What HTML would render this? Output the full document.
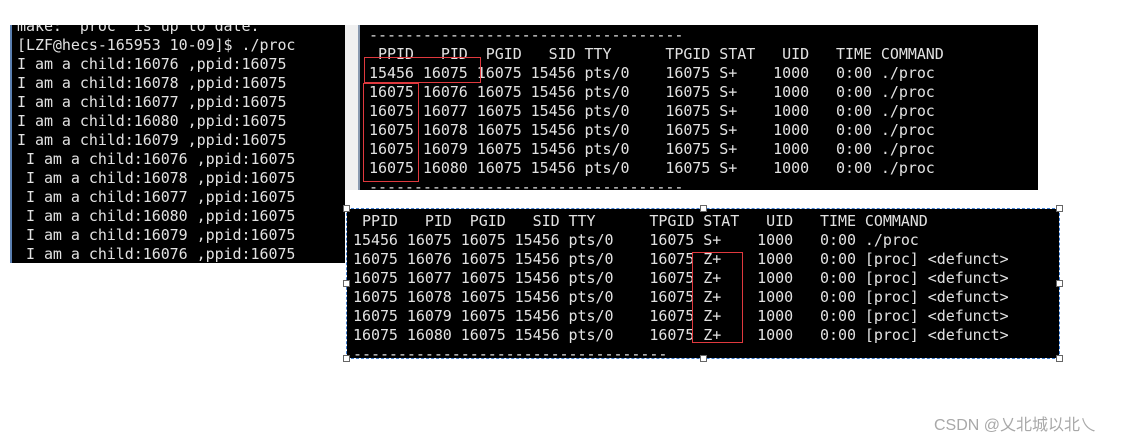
<!DOCTYPE html>
<html><head><meta charset="utf-8"><style>
body{margin:0;width:1140px;height:444px;background:#fff;position:relative;overflow:hidden}
.box{position:absolute;background:#000;overflow:hidden}
pre{margin:0;position:absolute;font-family:"DejaVu Sans Mono","Liberation Mono",monospace;font-size:15px;line-height:19px;color:#e2e2e2;white-space:pre;letter-spacing:-0.05px}
.r{position:absolute;border:1px solid #e0393e}
.h{position:absolute;width:5px;height:5px;background:#fff;border:1px solid #666}
</style></head><body>
<div class="box" style="left:10px;top:25px;width:333px;height:238px;border-left:2px solid #5a7fb0">
<pre style="left:5px;top:-8px">make: `proc' is up to date.
[LZF@hecs-165953 10-09]$ ./proc
I am a child:16076 ,ppid:16075
I am a child:16078 ,ppid:16075
I am a child:16077 ,ppid:16075
I am a child:16080 ,ppid:16075
I am a child:16079 ,ppid:16075
 I am a child:16076 ,ppid:16075
 I am a child:16078 ,ppid:16075
 I am a child:16077 ,ppid:16075
 I am a child:16080 ,ppid:16075
 I am a child:16079 ,ppid:16075
 I am a child:16076 ,ppid:16075</pre></div>
<div style="position:absolute;left:345px;top:25px;width:14px;height:165px;background:#f0f0f0"></div>
<div style="position:absolute;left:358px;top:25px;width:2px;height:165px;background:#8a9ab0"></div>
<div class="box" style="left:360px;top:25px;width:678px;height:165px">
<pre style="left:9px;top:1px">-----------------------------------
 PPID   PID  PGID   SID TTY      TPGID STAT   UID   TIME COMMAND
15456 16075 16075 15456 pts/0    16075 S+    1000   0:00 ./proc
16075 16076 16075 15456 pts/0    16075 S+    1000   0:00 ./proc
16075 16077 16075 15456 pts/0    16075 S+    1000   0:00 ./proc
16075 16078 16075 15456 pts/0    16075 S+    1000   0:00 ./proc
16075 16079 16075 15456 pts/0    16075 S+    1000   0:00 ./proc
16075 16080 16075 15456 pts/0    16075 S+    1000   0:00 ./proc
-----------------------------------</pre></div>
<div class="r" style="left:364px;top:57px;width:115px;height:24px"></div>
<div class="r" style="left:363px;top:83px;width:54px;height:97px"></div>
<div class="box" style="left:347px;top:209px;width:712px;height:149px;outline:1px dashed #3b7bd0">
<pre style="left:6px;top:3px"> PPID   PID  PGID   SID TTY      TPGID STAT   UID   TIME COMMAND
15456 16075 16075 15456 pts/0    16075 S+    1000   0:00 ./proc
16075 16076 16075 15456 pts/0    16075 Z+    1000   0:00 [proc] &lt;defunct&gt;
16075 16077 16075 15456 pts/0    16075 Z+    1000   0:00 [proc] &lt;defunct&gt;
16075 16078 16075 15456 pts/0    16075 Z+    1000   0:00 [proc] &lt;defunct&gt;
16075 16079 16075 15456 pts/0    16075 Z+    1000   0:00 [proc] &lt;defunct&gt;
16075 16080 16075 15456 pts/0    16075 Z+    1000   0:00 [proc] &lt;defunct&gt;
-----------------------------------</pre></div>
<div class="r" style="left:692px;top:252px;width:49px;height:89px"></div>
<div class="h" style="left:343px;top:205px"></div><div class="h" style="left:700px;top:205px"></div><div class="h" style="left:1056px;top:205px"></div>
<div class="h" style="left:343px;top:280px"></div><div class="h" style="left:1056px;top:280px"></div>
<div class="h" style="left:343px;top:355px"></div><div class="h" style="left:700px;top:355px"></div><div class="h" style="left:1056px;top:355px"></div>
<div style="position:absolute;left:934px;top:411px;font-family:'Liberation Sans','Noto Sans CJK SC',sans-serif;font-size:16px;color:#a8a8a8">CSDN @乂北城以北乀</div>
</body></html>
